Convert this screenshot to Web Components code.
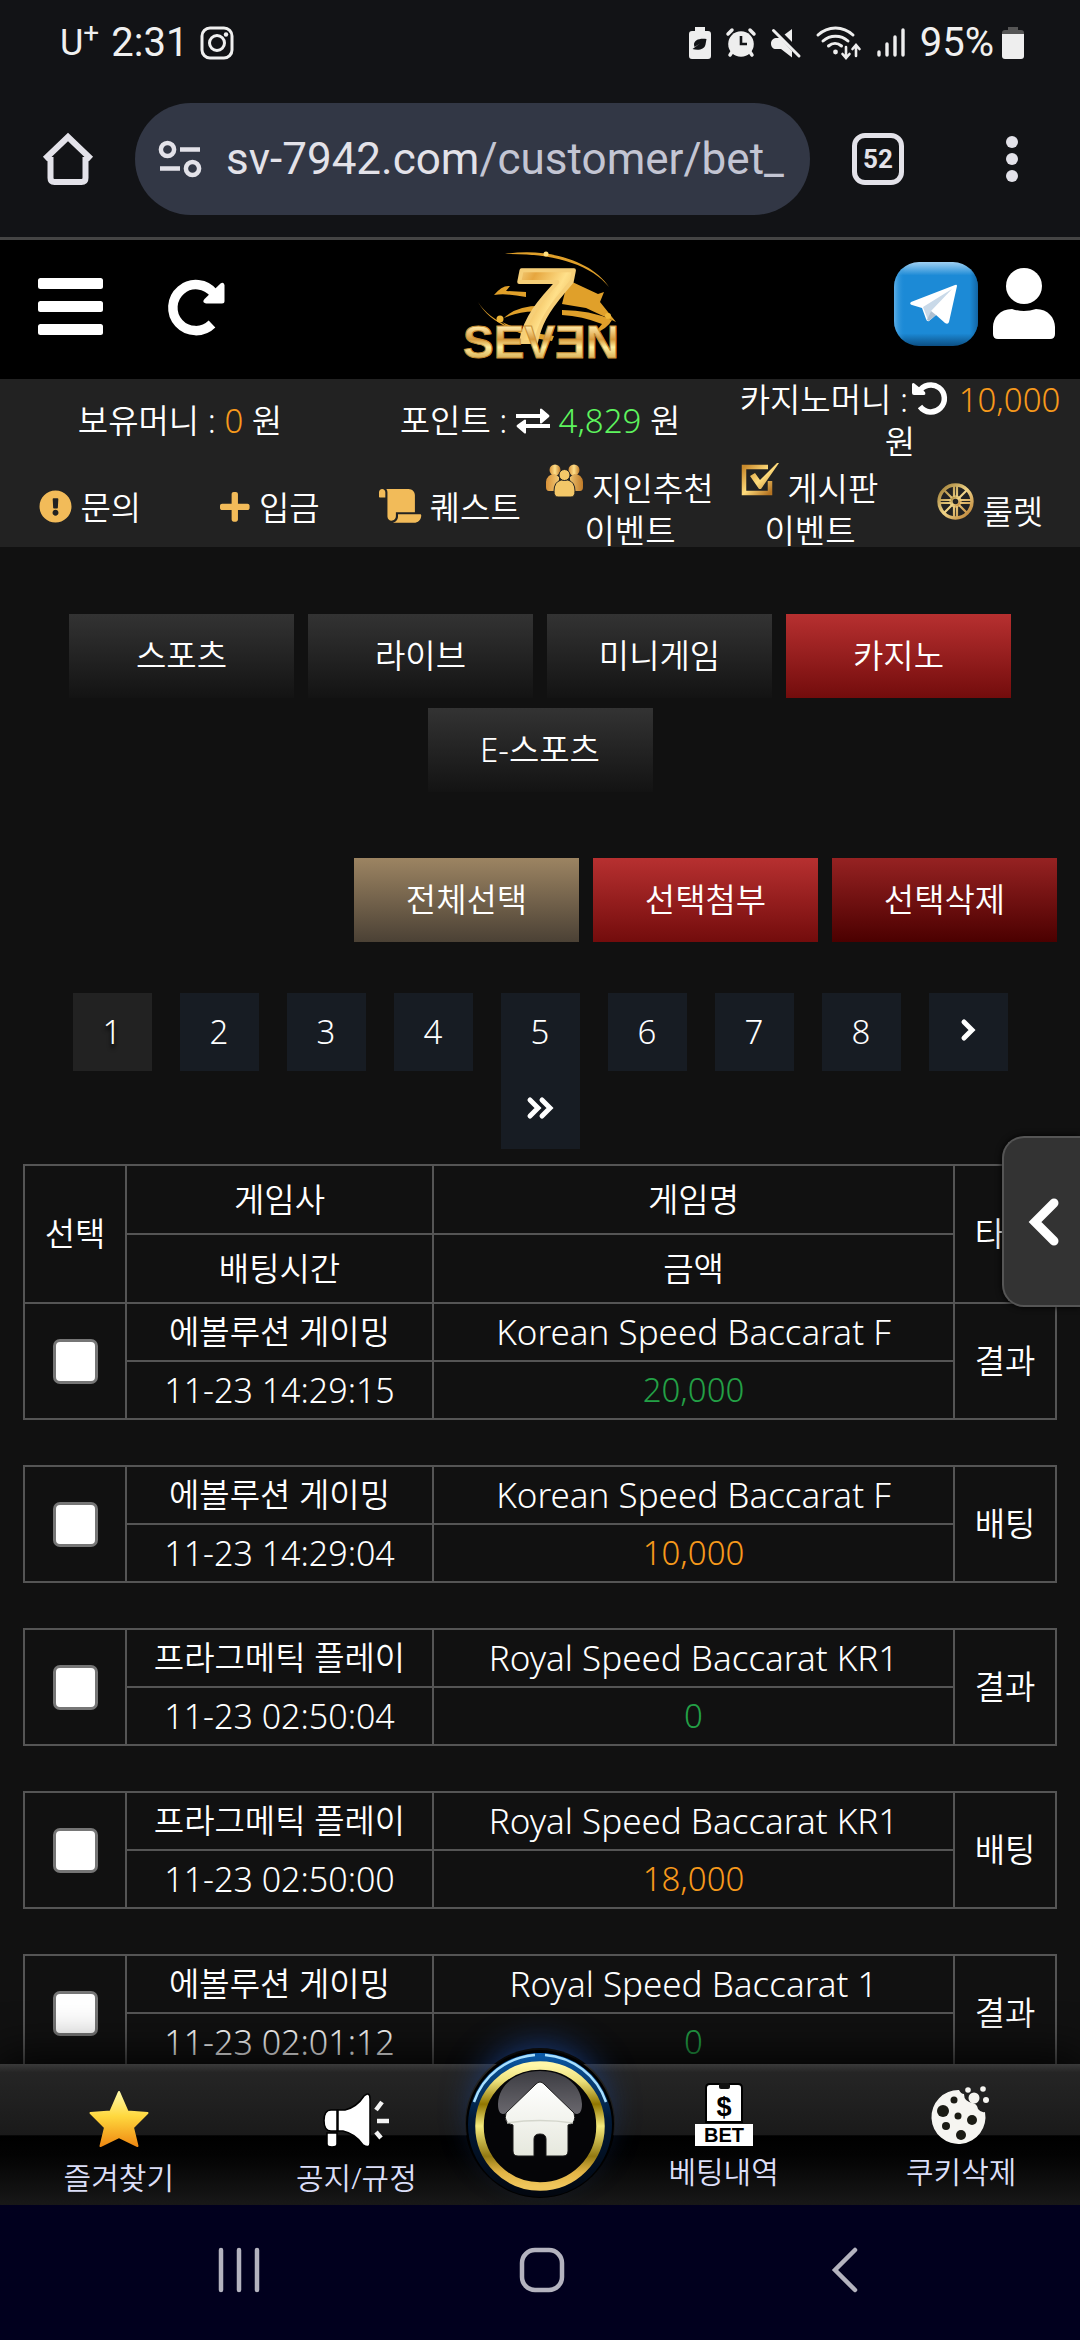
<!DOCTYPE html>
<html lang="ko">
<head>
<meta charset="utf-8">
<meta name="viewport" content="width=device-width, initial-scale=1">
<title>SEVEN - 베팅내역</title>
<style>
  html, body {
    margin: 0;
    height: 100%;
  }
  body {
    display: flex;
    flex-direction: column;
    overflow: hidden;
    background: #111;
    color: #fff;
    font-family: "Noto Sans", "Noto Sans CJK KR", sans-serif;
    font-size: 33px;
    font-weight: 350;
    line-height: 42px;
  }
</style>
</head>
<body>
  <status-bar></status-bar>
  <address-bar host="sv-7942.com" path="/customer/bet_" tabs="52"></address-bar>
  <site-header></site-header>
  <money-bar></money-bar>
  <quick-menu>
    <quick-item icon="notice">문의</quick-item>
    <quick-item icon="plus">입금</quick-item>
    <quick-item icon="scroll">퀘스트</quick-item>
    <quick-item icon="friends" raised>지인추천 이벤트</quick-item>
    <quick-item icon="board" raised>게시판 이벤트</quick-item>
    <quick-item icon="wheel" raised>룰렛</quick-item>
  </quick-menu>
  <page-content>
    <button-row>
      <seven-button>스포츠</seven-button>
      <seven-button>라이브</seven-button>
      <seven-button>미니게임</seven-button>
      <seven-button variant="red">카지노</seven-button>
      <seven-button>E-스포츠</seven-button>
    </button-row>
    <button-row align="end">
      <seven-button variant="gold">전체선택</seven-button>
      <seven-button variant="red">선택첨부</seven-button>
      <seven-button variant="wine">선택삭제</seven-button>
    </button-row>
    <page-nav current="1" last="8"></page-nav>
    <bet-table></bet-table>
    <side-toggle slot="overlay"></side-toggle>
  </page-content>
  <bottom-nav></bottom-nav>
  <system-nav></system-nav>

<script>
// name: [width, height, svg markup]
const ICONS = {
  instagram: [34, 34, `<g fill="none" stroke="#f0f0f0" stroke-width="3"><rect x="2" y="2" width="30" height="30" rx="8"/><circle cx="17" cy="17" r="7.5"/></g><circle cx="26" cy="8.500" r="2.200" fill="#f0f0f0"/>`],
  saver: [22, 32, `<path fill="#eee" d="M6 0h10v4h3a3 3 0 0 1 3 3v22a3 3 0 0 1-3 3H3a3 3 0 0 1-3-3V7a3 3 0 0 1 3-3h3z"/><path fill="#121316" d="M17.500 12c-8-1-12 1.500-12.500 5 0 2 .5 2.500 .5 3l5.500-3.500-7.500 5.500c5 1.500 12 1 13-4.500z"/>`],
  alarm: [30, 30, `<g fill="none" stroke="#eee" stroke-linecap="round" stroke-width="3.500"><path d="M2 6l4-4M28 6l-4-4M6 24l-2 3M24 24l2 3"/></g><circle cx="15" cy="16" r="12.800" fill="#eee"/><path d="M15 8v8h6" fill="none" stroke="#121316" stroke-width="2.600"/>`],
  mute: [30, 30, `<path fill="#eee" d="M21 1v14L13 7zM6 10h3l12 13v6.500L10 21H5c-3 0-5-2-5-5.500S2.500 10 6 10z"/><path stroke="#121316" stroke-width="3" d="M5 0l26 26"/><path stroke="#eee" stroke-width="3" stroke-linecap="round" d="M2.500 2.500L28 28"/>`],
  wifi: [46, 34, `<g fill="none" stroke="#eee" stroke-width="3" stroke-linecap="round"><path d="M2 9c10-9.500 25-9.500 35 0M7 15c7-6.500 18-6.500 25 0M12.500 20c4-3.500 9-3.500 13 0"/><path d="M30 21v10M26.500 28l3.500 4 3.500-4M40 30V20M36.500 23l3.500-4 3.500 4" stroke-width="2.600"/></g><circle cx="19.500" cy="26" r="2.400" fill="#eee"/>`],
  signal: [28, 30, `<g stroke="#eee" stroke-width="3.400" stroke-linecap="round"><path d="M2 24v3M10 16v11M18 9v18M26 2v25"/></g>`],
  battery: [22, 32, `<path fill="#555" d="M6 0h10v3h3a3 3 0 0 1 3 3v2H0V6a3 3 0 0 1 3-3h3z"/><path fill="#eee" d="M0 7h22v22a3 3 0 0 1-3 3H3a3 3 0 0 1-3-3z"/>`],
  home: [52, 52, `<path d="M3 26L26 4l23 22M8.500 24v21q0 4 4 4h27q4 0 4-4V24" fill="none" stroke="#e3e2e9" stroke-width="6" stroke-linejoin="miter"/>`],
  tune: [44, 38, `<g fill="none" stroke="#e3e2e9" stroke-width="4.500"><circle cx="9.500" cy="9.500" r="6.600"/><circle cx="34.500" cy="28.500" r="6.600"/><path d="M22 9.500h20M2 28.500h20"/></g>`],
  dots: [12, 46, `<g fill="#e3e2e9"><circle cx="6" cy="6" r="6"/><circle cx="6" cy="23" r="6"/><circle cx="6" cy="40" r="6"/></g>`],
  bars: [65, 57, `<g fill="#fff"><rect width="65" height="11" rx="2.500"/><rect y="23" width="65" height="11" rx="2.500"/><rect y="46" width="65" height="11" rx="2.500"/></g>`],
  reload: [56, 56, `<path d="M43 45A23 23 0 1 1 45 14.500" fill="none" stroke="#fff" stroke-width="9.500"/><path fill="#fff" d="M51.500 4.500q3-2 4 1.500v16q0 2.500-2.500 2.500H37q-4.500-1-1.500-4.500z"/>`],
  logo: [160, 118, `
    <defs>
      <linearGradient id="seven" x1="0" y1="0" x2="1" y2="1"><stop offset="0" stop-color="#fff3b8"/><stop offset=".3" stop-color="#e6a63e"/><stop offset=".55" stop-color="#ffe08a"/><stop offset="1" stop-color="#d08a22"/></linearGradient>
      <linearGradient id="word" x1="0" y1="0" x2="0" y2="1"><stop offset=".2" stop-color="#ffe9a8"/><stop offset=".45" stop-color="#d89a3c"/><stop offset=".6" stop-color="#fff0a0"/><stop offset="1" stop-color="#b8781c"/></linearGradient>
    </defs>
    <g fill="#e0a02a">
      <path d="M43 8c44-7 88 8 104 33-18-23-58-34-104-33z"/>
      <path d="M32 49q8-10 16-9l-4 5 20 1v5q-20-4-32-2zM106 34l30 14 6-2-4 10 16 20-30-14-24-4z"/>
      <path d="M16 56c12 20 46 34 76 37-36-2-66-18-76-37z"/>
      <path d="M42 72q14-14 44-12l-6 6q-20-2-38 6zM100 64q28 0 50 10-4 8-18 14l8-10q-20-8-40-9z"/>
      <path d="M40 76q20 10 52 14l-2 5q-34-4-50-19z"/>
    </g>
    <circle cx="84" cy="8" r="2.500" fill="#ffe080"/><circle cx="38" cy="73" r="3.500" fill="#f0b83a"/><circle cx="146" cy="70" r="3" fill="#f0b83a"/>
    <text x="50" y="96" font-family="Liberation Sans, sans-serif" font-size="104" font-weight="700" font-style="italic" fill="url(#seven)" stroke="#f6cf78" stroke-width="4" stroke-linejoin="round">7</text>
    <text x="1" y="112" font-family="Liberation Sans, sans-serif" font-size="46" font-weight="700" fill="url(#word)" stroke="#c98f34" stroke-width="1">SEVƎN</text>`],
  telegram: [86, 86, `
    <defs>
      <linearGradient id="sky" x1="0" y1="0" x2="0" y2="1"><stop offset="0" stop-color="#9fd0f2"/><stop offset=".16" stop-color="#1c8ad6"/><stop offset=".85" stop-color="#1c8ad6"/><stop offset="1" stop-color="#0c4f84"/></linearGradient>
      <linearGradient id="edge"><stop offset="0" stop-color="#6db8ec" stop-opacity=".8"/><stop offset=".13" stop-color="#1c8ad6" stop-opacity="0"/><stop offset=".9" stop-color="#12639f" stop-opacity="0"/><stop offset="1" stop-color="#0f5a96" stop-opacity=".8"/></linearGradient>
    </defs>
    <rect x="1" y="1" width="84" height="84" rx="25" fill="url(#sky)"/><rect x="1" y="1" width="84" height="84" rx="25" fill="url(#edge)"/>
    <path fill="#fff" d="M18 41l44-17q2-1 2 1l-8 36q-1 3-4 1L43 54l-7 6q-2 1-3-2l-4-11-10-3q-3-1-1-3z"/>
    <path fill="#c9d9e8" d="M30 46l29-18-21 22-3 9z"/><path fill="#aebfd0" d="M38 50l5 4-7 6-2-1z"/>`],
  user: [62, 72, `<g fill="#fff"><circle cx="31" cy="18" r="18"/><path d="M19 41q12 4 24 0c12 0 19 9 19 18v7q0 5-5 5H5q-5 0-5-5v-7c0-9 7-18 19-18z"/></g>`],
  exchange: [34, 24, `<path fill="#fff" d="M0 5h24V0q1-1 2 0l7 6q1 1 0 2l-7 6q-1 1-2 0V9H0zM34 15H10v-4q-1-1-2 0l-7 5q-1 1 0 2l7 6q1 1 2 0v-5h24z"/>`],
  undo: [34, 34, `<path d="M7 11a13.500 13.500 0 1 1 1 14.500" fill="none" stroke="#fff" stroke-width="5.500"/><path fill="#fff" d="M0 3q1-2 3 0l10 8q1 3-1 3H2q-2 0-2-2z"/>`],
  notice: [33, 33, `<path fill="#f2bb59" transform="scale(.0645)" d="M504 256c0 136.997-111.043 248-248 248S8 392.997 8 256C8 119.083 119.043 8 256 8s248 111.083 248 248zm-248 50c-25.405 0-46 20.595-46 46s20.595 46 46 46 46-20.595 46-46-20.595-46-46-46zm-43.673-165.346l7.418 136c.347 6.364 5.609 11.346 11.982 11.346h48.546c6.373 0 11.635-4.982 11.982-11.346l7.418-136c.375-6.874-5.098-12.654-11.982-12.654h-63.383c-6.884 0-12.356 5.780-11.981 12.654z"/>`],
  plus: [30, 33, `<path fill="#f2bb59" transform="scale(.0660)" d="M416 208H272V64c0-17.670-14.330-32-32-32h-32c-17.670 0-32 14.330-32 32v144H32c-17.670 0-32 14.330-32 32v32c0 17.670 14.330 32 32 32h144v144c0 17.670 14.330 32 32 32h32c17.670 0 32-14.330 32-32V304h144c17.670 0 32-14.330 32-32v-32c0-17.670-14.330-32-32-32z"/>`],
  scroll: [42, 34, `<path fill="#f2bb59" transform="scale(.0660)" d="M48 0C21.530 0 0 21.530 0 48v64c0 8.840 7.160 16 16 16h80V48C96 21.530 74.470 0 48 0zm208 412.570V352h288V96c0-52.940-43.060-96-96-96H111.590C121.740 13.410 128 29.920 128 48v368c0 38.870 34.650 69.650 74.750 63.120C234.220 474 256 444.460 256 412.570zM288 384v32c0 52.930-43.060 96-96 96h336c61.860 0 112-50.140 112-112 0-8.840-7.160-16-16-16H288z"/>`],
  friends: [37, 33, `
    <defs><linearGradient id="g"><stop offset="0" stop-color="#d8923a"/><stop offset=".5" stop-color="#ffe08a"/><stop offset="1" stop-color="#c07a28"/></linearGradient></defs>
    <g fill="url(#g)"><circle cx="9" cy="6" r="5.500"/><circle cx="28" cy="6" r="5.500"/><path d="M0 18q1-8 9-8l4 3v14H3q-3 0-3-4zM37 18q-1-8-9-8l-4 3v14h10q3 0 3-4z"/></g>
    <g fill="#f3c768" stroke="#222" stroke-width="1"><path d="M8 27q0-9 7-11h7q7 2 7 11 0 6-4 6H12q-4 0-4-6z"/><circle cx="18.500" cy="11" r="5.500"/></g>`],
  board: [37, 34, `
    <defs><linearGradient id="g" x1="0" y1="0" x2="1" y2="1"><stop offset="0" stop-color="#c98a2c"/><stop offset=".5" stop-color="#ffdc7c"/><stop offset="1" stop-color="#b57422"/></linearGradient></defs>
    <path d="M26 4H2v26h26V18" fill="none" stroke="url(#g)" stroke-width="4.500"/><path fill="url(#g)" d="M8 13l5-3 5 7L35 0h2L19 26h-2z"/>`],
  wheel: [37, 37, `
    <defs><linearGradient id="g" x1="0" y1="0" x2="1" y2="1"><stop offset="0" stop-color="#9a7830"/><stop offset=".5" stop-color="#f0d488"/><stop offset="1" stop-color="#b87a2e"/></linearGradient></defs>
    <g fill="none" stroke="url(#g)" stroke-width="3.400"><circle cx="18.500" cy="18.500" r="16.500"/><circle cx="18.500" cy="18.500" r="4.500"/><path d="M17 2v12M20 2v12M17 23v12M20 23v12M2 17h12M2 20h12M23 17h12M23 20h12M7 7l8 8M30 7l-8 8M7 30l8-8M30 30l-8-8" stroke-width="2.200"/></g>`],
  next: [16, 24, `<path d="M4 4l8 8-8 8" fill="none" stroke="#fff" stroke-width="5" stroke-linecap="round"/>`],
  last: [28, 24, `<path d="M4 4l8 8-8 8M16 4l8 8-8 8" fill="none" stroke="#fff" stroke-width="5" stroke-linecap="round"/>`],
  chevron: [32, 50, `<path d="M26 6L7 25l19 19" fill="none" stroke="#fff" stroke-width="9" stroke-linecap="round"/>`],
  star: [60, 58, `
    <defs><linearGradient id="g" x1="0" y1="0" x2="0" y2="1"><stop offset="0" stop-color="#fff9a8"/><stop offset=".45" stop-color="#ffd83e"/><stop offset="1" stop-color="#f08a12"/></linearGradient></defs>
    <path fill="url(#g)" stroke="url(#g)" stroke-width="2" stroke-linejoin="round" d="M30 2l8.500 19.500L58.500 23 44 37.500 48.500 56 30 47 11.500 56 16 37.500 1.500 23l20-1.500z"/>`],
  megaphone: [66, 56, `
    <g fill="#fff" stroke="#000" stroke-width="1.500"><path d="M4 41h10v11q0 3-5 3t-5-3z"/><path d="M15 18h7q12-3 19-14 6-5 6 3v44q0 6-7 2Q33 42 20 39h-5z"/><path d="M14 18v21H8q-7 0-7-10.500T8 18z"/></g>
    <path d="M53 18l6-8M54 29h12M53 40l5 6" stroke="#f4f4f4" stroke-width="4.500"/>`],
  bet: [58, 64, `
    <path fill="#fff" stroke="#000" stroke-width="2" d="M15 2h28q4 0 4 4v34H11V6q0-4 4-4z"/><rect x="24" y="1" width="11" height="6" rx="2" fill="#111"/>
    <text x="29" y="34" text-anchor="middle" font-family="Liberation Sans, sans-serif" font-size="27" font-weight="700" fill="#000">$</text>
    <rect y="42" width="58" height="22" fill="#fff"/>
    <text x="29" y="60" text-anchor="middle" font-family="Liberation Sans, sans-serif" font-size="20" font-weight="700" fill="#000">BET</text>`],
  cookie: [60, 60, `
    <path fill="#f6f5f1" d="M28 4q2 4 5 4 0 8 9 9 4 1 5 6 3 4 7 3a27 27 0 1 1-26-22z"/>
    <g fill="#f6f5f1"><circle cx="43" cy="12" r="5.500"/><circle cx="37" cy="4" r="2.800"/><circle cx="52" cy="3" r="2.800"/><circle cx="55" cy="14" r="3"/></g>
    <g fill="#1b1b14"><circle cx="12" cy="25" r="6"/><circle cx="23" cy="14" r="3.500"/><circle cx="27" cy="30" r="3.500"/><circle cx="41" cy="34" r="5"/><circle cx="15" cy="40" r="4"/><circle cx="30" cy="49" r="5"/></g>`],
  homeBall: [150, 150, `
    <defs>
      <linearGradient id="gold" x1="0" y1="0" x2="0" y2="1"><stop offset="0" stop-color="#fff7a8"/><stop offset=".13" stop-color="#ece07a"/><stop offset=".32" stop-color="#917600"/><stop offset=".5" stop-color="#f5ea7c"/><stop offset=".75" stop-color="#937a12"/><stop offset=".88" stop-color="#e2b445"/><stop offset="1" stop-color="#f0c65c"/></linearGradient>
      <linearGradient id="rim" x1="0" y1="0" x2="0" y2="1"><stop offset="0" stop-color="#0a5aa8"/><stop offset=".45" stop-color="#021a38"/><stop offset="1" stop-color="#02060e"/></linearGradient>
      <linearGradient id="gloss" x1="0" y1="0" x2="0" y2="1"><stop offset="0" stop-color="#3c3c42"/><stop offset="1" stop-color="#6a686e"/></linearGradient>
      <linearGradient id="wall" x1="0" y1="0" x2="0" y2="1"><stop offset="0" stop-color="#fff"/><stop offset="1" stop-color="#e6e8dd"/></linearGradient>
    </defs>
    <circle cx="75" cy="76" r="74" fill="#000"/><circle cx="75" cy="77" r="72" fill="url(#rim)"/>
    <path d="M9 54A70 70 0 0 1 70 7M80 7a70 70 0 0 1 61 47" fill="none" stroke="#a8e0ff" stroke-width="2.500"/>
    <circle cx="75" cy="78" r="60.500" fill="#050507" stroke="url(#gold)" stroke-width="8.500"/>
    <path fill="url(#gloss)" d="M33 56c2-44 82-44 84 0 0 12-6 12-12 6H45c-6 6-12 6-12-6z"/>
    <path d="M48 62h54v16H48z" fill="#050507"/>
    <path fill="url(#wall)" stroke="#1a1a1a" stroke-width="1" d="M71 36q4-4 8 0l30 29q3 10-6 12v26q0 5-5 5H81V91q0-5-6-5t-6 5v17H53q-5 0-5-5V77q-10-2-7-12z"/>
    <path d="M42 75q33-5 66 0" fill="none" stroke="#d4d6cc" stroke-width="1.500"/>`],
  recents: [42, 46, `<g stroke="#b4b3bf" stroke-width="4.500" stroke-linecap="round"><path d="M3 3v40M21 3v40M39 3v40"/></g>`],
  sysHome: [46, 46, `<rect x="3" y="3" width="40" height="40" rx="13" fill="none" stroke="#b4b3bf" stroke-width="4.500"/>`],
  back: [28, 46, `<path d="M24 3L4 23l20 20" fill="none" stroke="#b4b3bf" stroke-width="4.500" stroke-linecap="round"/>`],
};

function define(name, render) {
  customElements.define(name, class extends HTMLElement {
    constructor() {
      super();
      this.attachShadow({ mode: 'open' });
    }

    connectedCallback() {
      this.shadowRoot.innerHTML = render(this);
    }
  });
}

const BUTTON_RESET = `
  button {
    all: unset;
    box-sizing: border-box;
    display: flex;
    align-items: center;
    justify-content: center;
    cursor: pointer;
  }
`;

define('ui-icon', (el) => {
  const [w, h, markup] = ICONS[el.getAttribute('name')];
  return `
    <style>
      :host { display: inline-block; flex: none; line-height: 0; }
      svg { display: block; overflow: visible; }
    </style>
    <svg width="${w}" height="${h}" viewBox="0 0 ${w} ${h}" aria-hidden="true">${markup}</svg>
  `;
});

define('status-bar', () => `
  <style>
    :host {
      display: flex;
      align-items: center;
      justify-content: space-between;
      flex: none;
      height: 86px;
      padding: 0 56px 0 60px;
      background: #121316;
      color: #f0f0f0;
      font: 400 40px/48px Roboto, sans-serif;
    }
    div { display: flex; align-items: center; }
    .left { gap: 12px; }
    .right { gap: 15px; }
    .carrier { font-size: 36px; }
    sup { font-size: 28px; line-height: 0; }
    .level { display: flex; align-items: center; gap: 8px; }
  </style>
  <div class="left">
    <span class="carrier">U<sup>+</sup></span>
    <time>2:31</time>
    <ui-icon name="instagram"></ui-icon>
  </div>
  <div class="right">
    <ui-icon name="saver"></ui-icon>
    <ui-icon name="alarm"></ui-icon>
    <ui-icon name="mute"></ui-icon>
    <ui-icon name="wifi"></ui-icon>
    <ui-icon name="signal"></ui-icon>
    <span class="level">95%<ui-icon name="battery"></ui-icon></span>
  </div>
`);

define('address-bar', (el) => `
  <style>
    :host {
      display: flex;
      align-items: center;
      flex: none;
      padding: 17px 62px 22px 42px;
      border-bottom: 3px solid #444;
      background: #121316;
      color: #e3e2e9;
      font: 400 44px/52px Roboto, sans-serif;
    }
    ${BUTTON_RESET}
    .url {
      display: flex;
      align-items: center;
      flex: 1;
      gap: 24px;
      min-width: 0;
      box-sizing: border-box;
      height: 112px;
      margin: 0 42px 0 41px;
      padding: 0 23px;
      border-radius: 56px;
      background: #323745;
      white-space: nowrap;
    }
    .url span span { color: #c3c5d3; }
    .tabs {
      flex: none;
      width: 52px;
      height: 52px;
      margin-right: 102px;
      border: 5px solid #e3e2e9;
      border-radius: 13px;
      font-size: 26px;
      font-weight: 700;
    }
  </style>
  <button aria-label="홈"><ui-icon name="home"></ui-icon></button>
  <div class="url">
    <ui-icon name="tune"></ui-icon>
    <span>${el.getAttribute('host')}<span>${el.getAttribute('path')}</span></span>
  </div>
  <button class="tabs">${el.getAttribute('tabs')}</button>
  <button aria-label="메뉴"><ui-icon name="dots"></ui-icon></button>
`);

define('site-header', () => `
  <style>
    :host {
      display: grid;
      grid-template-columns: 1fr auto 1fr;
      align-items: center;
      flex: none;
      height: 139px;
      padding: 0 25px 0 38px;
      background: #000;
    }
    ${BUTTON_RESET}
    .side { display: flex; align-items: center; gap: 66px; padding-bottom: 6px; }
    .right { justify-content: flex-end; gap: 14px; padding-bottom: 12px; }
    a { display: block; margin-left: -10px; }
  </style>
  <div class="side">
    <button aria-label="전체메뉴"><ui-icon name="bars"></ui-icon></button>
    <button aria-label="새로고침"><ui-icon name="reload"></ui-icon></button>
  </div>
  <a href="#" aria-label="SEVEN"><ui-icon name="logo"></ui-icon></a>
  <div class="side right">
    <button aria-label="텔레그램"><ui-icon name="telegram"></ui-icon></button>
    <button aria-label="내정보"><ui-icon name="user"></ui-icon></button>
  </div>
`);

define('money-bar', () => `
  <style>
    :host {
      display: grid;
      grid-template-columns: repeat(3, 1fr);
      align-items: center;
      flex: none;
      height: 84px;
      background: #222;
      text-align: center;
    }
    div { padding: 0 8px; }
    b { font-weight: inherit; color: #f7991c; }
    .point { color: #5ef55e; }
    .undo { margin: 0 4px; vertical-align: -3px; }
  </style>
  <div>보유머니 : <b>0</b> 원</div>
  <div>포인트 : <ui-icon name="exchange"></ui-icon> <b class="point">4,829</b> 원</div>
  <div>카지노머니 :<ui-icon class="undo" name="undo"></ui-icon> <b>10,000</b> 원</div>
`);

define('quick-menu', () => `
  <style>
    :host {
      display: grid;
      grid-template-columns: repeat(6, 1fr);
      align-items: center;
      box-sizing: border-box;
      flex: none;
      height: 84px;
      padding-bottom: 4px;
      background: #222;
    }
  </style>
  <slot></slot>
`);

define('quick-item', (el) => `
  <style>
    :host { display: block; text-align: center; word-break: keep-all; }
    a { color: inherit; text-decoration: none; }
    ui-icon { vertical-align: -3px; }
    :host([raised]) ui-icon { vertical-align: 4px; }
  </style>
  <a href="#"><ui-icon name="${el.getAttribute('icon')}"></ui-icon> <slot></slot></a>
`);

define('page-content', () => `
  <style>
    :host {
      position: relative;
      display: block;
      flex: 1;
      min-height: 0;
      overflow: hidden;
      background: #111;
    }
    main {
      display: flex;
      flex-direction: column;
      padding: 67px 23px 0;
    }
  </style>
  <main><slot></slot></main>
  <slot name="overlay"></slot>
`);

define('button-row', () => `
  <style>
    :host {
      display: flex;
      flex-wrap: wrap;
      justify-content: center;
      gap: 10px 14px;
      margin-bottom: 66px;
    }
    :host([align="end"]) { justify-content: flex-end; margin-bottom: 51px; }
  </style>
  <slot></slot>
`);

define('seven-button', () => `
  <style>
    :host { display: block; }
    ${BUTTON_RESET}
    button {
      width: 225px;
      height: 84px;
      background: linear-gradient(#333, #131313);
    }
    :host([variant="red"]) button { background: linear-gradient(#b73030, #730c0c); }
    :host([variant="gold"]) button { background: linear-gradient(#9c8462, #4b4135); }
    :host([variant="wine"]) button { background: linear-gradient(#962222, #4b0000); }
  </style>
  <button><slot></slot></button>
`);

define('page-nav', (el) => {
  const current = Number(el.getAttribute('current'));
  const last = Number(el.getAttribute('last'));
  let links = '';
  for (let i = 1; i <= last; i++) {
    links += `<a href="#"${i === current ? ' aria-current="page"' : ''}>${i}</a>`;
  }
  return `
    <style>
      :host { display: block; margin-bottom: 15px; }
      nav {
        display: flex;
        flex-wrap: wrap;
        justify-content: center;
        column-gap: 28px;
      }
      a {
        display: flex;
        align-items: center;
        justify-content: center;
        width: 79px;
        height: 78px;
        background: #171c23;
        color: #fff;
        text-decoration: none;
      }
      a[aria-current] { background: #222; text-shadow: 0 4px 4px #000; }
      ui-icon { padding-bottom: 4px; }
    </style>
    <nav>
      ${links}
      <a href="#" aria-label="다음"><ui-icon name="next"></ui-icon></a>
      <a href="#" aria-label="마지막"><ui-icon name="last"></ui-icon></a>
    </nav>
  `;
});

const BETS = [
  { maker: '에볼루션 게이밍', time: '11-23 14:29:15', game: 'Korean Speed Baccarat F', amount: '20,000', type: '결과' },
  { maker: '에볼루션 게이밍', time: '11-23 14:29:04', game: 'Korean Speed Baccarat F', amount: '10,000', type: '배팅' },
  { maker: '프라그메틱 플레이', time: '11-23 02:50:04', game: 'Royal Speed Baccarat KR1', amount: '0', type: '결과' },
  { maker: '프라그메틱 플레이', time: '11-23 02:50:00', game: 'Royal Speed Baccarat KR1', amount: '18,000', type: '배팅' },
  { maker: '에볼루션 게이밍', time: '11-23 02:01:12', game: 'Royal Speed Baccarat 1', amount: '0', type: '결과' },
];

define('bet-table', () => `
  <style>
    :host { display: block; }
    table {
      width: 100%;
      table-layout: fixed;
      border-collapse: collapse;
      text-align: center;
    }
    .pick, .type { width: 102px; }
    .maker { width: 307px; }
    th, td {
      padding: 0;
      border: 2px solid #555;
      font-weight: inherit;
      white-space: nowrap;
    }
    thead tr { height: 69px; }
    tbody tr { height: 58px; }
    tbody tr.gap { height: 47px; }
    .gap td { border-width: 2px 0; }
    .game { font-size: 35px; }
    .time { font-size: 34px; }
    .result { color: #23a046; }
    .bet { color: #f7991c; }
    input {
      appearance: none;
      display: block;
      box-sizing: border-box;
      width: 45px;
      height: 45px;
      margin: 0 auto;
      border: 3px solid #767676;
      border-radius: 7px;
      background: #fff;
    }
  </style>
  <table>
    <colgroup><col class="pick"><col class="maker"><col><col class="type"></colgroup>
    <thead>
      <tr><th rowspan="2">선택</th><th>게임사</th><th>게임명</th><th rowspan="2">타입</th></tr>
      <tr><th>배팅시간</th><th>금액</th></tr>
    </thead>
    <tbody>
      ${BETS.map((b) => `
        <tr>
          <td rowspan="2"><input type="checkbox" aria-label="${b.time} 선택"></td>
          <td>${b.maker}</td><td class="game">${b.game}</td><td rowspan="2">${b.type}</td>
        </tr>
        <tr><td class="time">${b.time}</td><td class="${b.type === '결과' ? 'result' : 'bet'}">${b.amount}</td></tr>
      `).join('<tr class="gap"><td colspan="4"></td></tr>')}
    </tbody>
  </table>
`);

define('side-toggle', () => `
  <style>
    :host { position: absolute; top: 589px; right: 0; }
    ${BUTTON_RESET}
    button {
      width: 78px;
      height: 171px;
      padding-left: 4px;
      border: 2px solid #555;
      border-right: 0;
      border-radius: 22px 0 0 22px;
      background: #333;
      box-shadow: 0 0 6px #000;
    }
  </style>
  <button aria-label="열기"><ui-icon name="chevron"></ui-icon></button>
`);

define('bottom-nav', () => `
  <style>
    :host {
      position: relative;
      display: block;
      flex: none;
      background: linear-gradient(#3a3a3a, #252525 6%, #1a1a1a 50%, #000 51%, #030303 65%, #181818);
      box-shadow: 0 0 50px 4px #000;
      color: #dcdff8;
      font-size: 30px;
      line-height: 32px;
    }
    nav {
      display: grid;
      grid-template-columns: 22fr 22fr minmax(0, 12fr) 22fr 22fr;
      height: 141px;
    }
    a {
      display: flex;
      flex-direction: column;
      align-items: center;
      justify-content: flex-end;
      gap: 14px;
      padding-bottom: 11px;
      color: inherit;
      text-decoration: none;
    }
    a.high { gap: 10px; padding-bottom: 17px; }
    a.home { justify-content: flex-start; margin-top: -16px; padding: 0; }
    .home ui-icon { border-radius: 50%; box-shadow: 0 -14px 36px -14px #1b4390; }
  </style>
  <nav>
    <a href="#"><ui-icon name="star"></ui-icon>즐겨찾기</a>
    <a href="#"><ui-icon name="megaphone"></ui-icon>공지/규정</a>
    <a href="#" class="home" aria-label="홈"><ui-icon name="homeBall"></ui-icon></a>
    <a href="#" class="high"><ui-icon name="bet"></ui-icon>베팅내역</a>
    <a href="#" class="high"><ui-icon name="cookie"></ui-icon>쿠키삭제</a>
  </nav>
`);

define('system-nav', () => `
  <style>
    :host {
      position: relative;
      display: flex;
      align-items: center;
      flex: none;
      height: 135px;
      padding: 0 84px 0 88px;
      background: #01001e;
    }
    ${BUTTON_RESET}
    button { flex: 1; height: 100%; padding-bottom: 6px; }
  </style>
  <button aria-label="최근 앱"><ui-icon name="recents"></ui-icon></button>
  <button aria-label="홈"><ui-icon name="sysHome"></ui-icon></button>
  <button aria-label="뒤로"><ui-icon name="back"></ui-icon></button>
`);
</script>
</body>
</html>
